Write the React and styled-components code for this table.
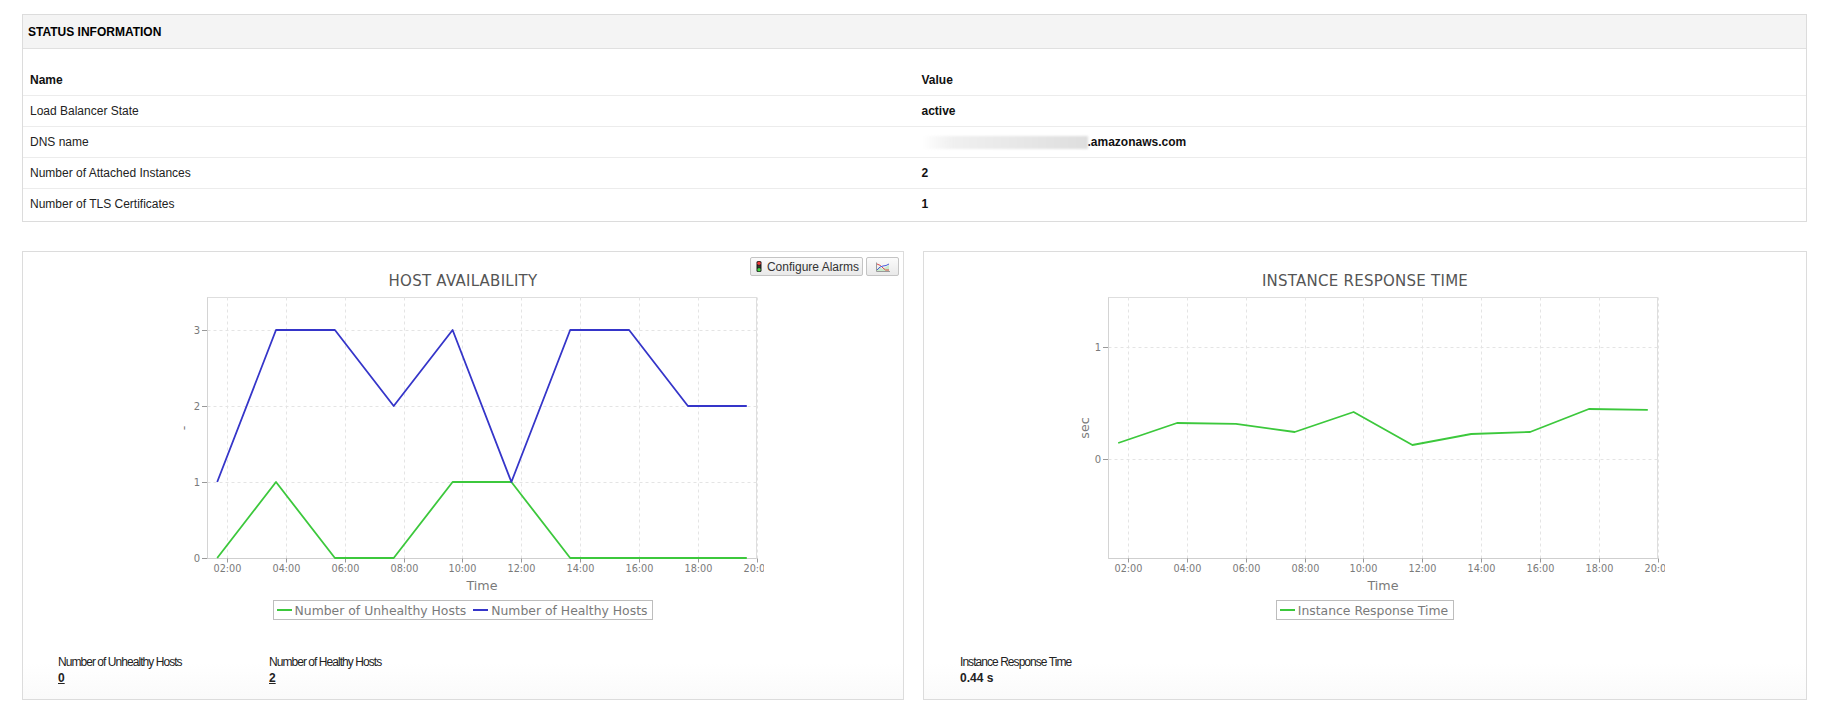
import React from 'react';
import styled, { createGlobalStyle } from 'styled-components';

const GlobalStyle = createGlobalStyle`
  html, body { margin: 0; padding: 0; background: #fff; }
  body { font-family: "Liberation Sans", Arial, sans-serif; font-size: 12px; color: #222; }
  * { box-sizing: border-box; }
`;

const Page = styled.div`
  width: 1822px;
  padding: 14px 15px 10px 22px;
`;

const StatusPanel = styled.section`
  border: 1px solid #dcdcdc;
  background: #fff;
`;

const PanelHeader = styled.div`
  height: 34px;
  display: flex;
  align-items: center;
  padding-left: 5px;
  background: #f4f4f4;
  border-bottom: 1px solid #e0e0e0;
  font-weight: bold;
  font-size: 12px;
  color: #000;
`;

const InfoTable = styled.div`
  margin-top: 16px;
  padding-bottom: 1px;
`;

const InfoRow = styled.div`
  display: grid;
  grid-template-columns: 1fr 1fr;
  align-items: center;
  height: 31px;
  border-bottom: 1px solid ${(p) => (p.$last ? 'transparent' : '#ececec')};
`;

const Cell = styled.div`
  padding-left: 7px;
  font-size: 12px;
  font-weight: ${(p) => (p.$bold ? 'bold' : 'normal')};
  color: ${(p) => (p.$bold ? '#111' : '#222')};
  display: flex;
  align-items: center;
`;

const Masked = styled.span`
  display: inline-block;
  width: 166px;
  height: 13px;
  background: linear-gradient(90deg, rgba(238,238,238,0) 0%, #f0f0f0 18%, #e8e8e8 55%, #dedede 100%);
  filter: blur(1.2px);
`;

const ChartsRow = styled.div`
  display: grid;
  grid-template-columns: 882px 884px;
  column-gap: 19px;
  margin-top: 29px;
`;

const ChartPanel = styled.section`
  position: relative;
  height: 449px;
  border: 1px solid #dcdcdc;
  display: flex;
  flex-direction: column;
  align-items: center;
  padding-top: 20px;
  background: linear-gradient(to bottom, #fff 0%, #fff 92%, #fafafa 100%);
`;

const Toolbar = styled.div`
  position: absolute;
  top: 5px;
  right: 4px;
  display: flex;
  gap: 3px;
`;

const ToolButton = styled.button`
  height: 19px;
  min-width: ${(p) => (p.$icon ? '33px' : 'auto')};
  padding: ${(p) => (p.$icon ? '0' : '0 3px 0 5px')};
  display: flex;
  align-items: center;
  justify-content: center;
  gap: 5px;
  border: 1px solid #c4c4c4;
  border-radius: 2px;
  background: linear-gradient(to bottom, #fbfbfb, #e9e9e9);
  font-family: "Liberation Sans", Arial, sans-serif;
  font-size: 12px;
  color: #333;
  cursor: pointer;
`;

const ChartTitle = styled.div`
  font-family: "DejaVu Sans", Verdana, sans-serif;
  font-size: 15px;
  line-height: 18px;
  letter-spacing: 0.25px;
  color: #555;
  margin-bottom: 1px;
`;

const ChartSvg = styled.svg`
  display: block;
  align-self: flex-start;
  font-family: "DejaVu Sans", Verdana, sans-serif;
`;

const Legend = styled.div`
  display: inline-flex;
  align-items: center;
  height: 20px;
  margin-top: 6px;
  padding: 0 5px 0 3px;
  gap: 7px;
  border: 1px solid #bdbdbd;
  font-family: "DejaVu Sans", Verdana, sans-serif;
  font-size: 12.4px;
  color: #7a7a7a;
`;

const LegendItem = styled.span`
  display: flex;
  align-items: center;
  gap: 3px;
`;

const Swatch = styled.span`
  width: 15px;
  height: 2px;
  background: ${(p) => p.$color};
`;

const Summary = styled.div`
  align-self: stretch;
  display: flex;
  margin-top: 35px;
  padding-left: ${(p) => p.$pad || '35px'};
`;

const SummaryItem = styled.div`
  width: 211px;
`;

const SummaryLabel = styled.div`
  font-size: 12px;
  line-height: 15px;
  letter-spacing: -0.95px;
  color: #222;
`;

const SummaryValue = styled.div`
  margin-top: 1px;
  font-size: 12px;
  line-height: 15px;
  font-weight: bold;
  color: #222;
  text-decoration: ${(p) => (p.$link ? 'underline' : 'none')};
`;

const BLUE = '#3535c9';
const GREEN = '#3cc83c';

const TrafficLight = () => (
  <svg width="6" height="11" viewBox="0 0 6 11">
    <rect x="0.5" y="0" width="5" height="11" rx="1.6" fill="#1f1f1f" />
    <circle cx="3" cy="2.3" r="1.7" fill="#f03a3a" />
    <circle cx="3" cy="5.5" r="1.2" fill="#3a3a30" />
    <circle cx="3" cy="8.7" r="1.7" fill="#46d646" />
  </svg>
);

const ChartTypeIcon = () => (
  <svg width="15" height="10" viewBox="0 0 15 10">
    <path d="M1 9 L4 5 L8 7 L14 3 L14 9 Z" fill="#bfe8bf" opacity="0.8" />
    <path d="M1.5 0.5 V9.5 H15" fill="none" stroke="#9a9a9a" strokeWidth="1" />
    <path d="M2 2 Q6 3 8 6 T14 8" fill="none" stroke="#e04a4a" strokeWidth="1" />
    <path d="M2 8 Q5 4 8 4 T14 2" fill="none" stroke="#4a5ad8" strokeWidth="1" />
  </svg>
);

const X_LABELS = ['02:00', '04:00', '06:00', '08:00', '10:00', '12:00', '14:00', '16:00', '18:00', '20:00'];
const xOfHour = (h) => 204 + (h - 2) * 29.42;
const xOfPoint = (k) => 194.2 + 58.84 * k;

function LineChart({ id, yTicks, yToPx, yTitle, series }) {
  const plotL = 184.5;
  const plotR = 733.5;
  const plotT = 6.5;
  const plotB = 267.5;
  return (
    <ChartSvg width="880" height="303" viewBox="0 0 880 303">
      <defs>
        <clipPath id={id}>
          <rect x="0" y="0" width="741" height="303" />
        </clipPath>
      </defs>
      <rect x={plotL} y={plotT} width={plotR - plotL} height={plotB - plotT} fill="#fff" stroke="#dedede" />
      {X_LABELS.map((l, i) => {
        const x = Math.round(xOfHour(2 + i * 2)) + 0.5;
        return (
          <line key={l} x1={x} x2={x} y1={plotT} y2={plotB} stroke="#e4e4e4" strokeDasharray="3 3" />
        );
      })}
      {yTicks.map((v) => {
        const y = Math.round(yToPx(v)) + 0.5;
        return (
          <g key={v}>
            <line x1={plotL} x2={plotR} y1={y} y2={y} stroke="#e4e4e4" strokeDasharray="3 3" />
            <line x1={179} x2={plotL} y1={y} y2={y} stroke="#999" />
            <text x="177" y={y + 3.6} fontSize="10" fill="#7a7a7a" textAnchor="end">{v}</text>
          </g>
        );
      })}
      <line x1={plotL} x2={plotR} y1={plotB} y2={plotB} stroke="#cfcfcf" />
      <line x1={plotL} x2={plotL} y1={plotT} y2={plotB} stroke="#d4d4d4" />
      <g clipPath={`url(#${id})`}>
        {X_LABELS.map((l, i) => {
          const x = Math.round(xOfHour(2 + i * 2)) + 0.5;
          return (
            <g key={l}>
              <line x1={x} x2={x} y1={plotB} y2={plotB + 4} stroke="#999" />
              <text x={x} y="280.8" fontSize="9.7" fill="#7a7a7a" textAnchor="middle">{l}</text>
            </g>
          );
        })}
      </g>
      <text x={(plotL + plotR) / 2} y="298.5" fontSize="12.7" fill="#7a7a7a" textAnchor="middle">Time</text>
      <text
        x="0"
        y="0"
        fontSize="12.7"
        fill="#7a7a7a"
        textAnchor="middle"
        transform={`translate(165 137) rotate(-90)`}
      >
        {yTitle}
      </text>
      {series.map((s) => (
        <polyline
          key={s.name}
          fill="none"
          stroke={s.color}
          strokeWidth="1.8"
          strokeLinejoin="round"
          points={s.values.map((v, k) => `${xOfPoint(k).toFixed(1)},${yToPx(v).toFixed(1)}`).join(' ')}
        />
      ))}
    </ChartSvg>
  );
}

const statusRows = [
  { name: 'Load Balancer State', value: 'active' },
  { name: 'DNS name', value: '.amazonaws.com', masked: true },
  { name: 'Number of Attached Instances', value: '2' },
  { name: 'Number of TLS Certificates', value: '1' },
];

const hostSeries = [
  { name: 'Number of Unhealthy Hosts', color: GREEN, values: [0, 1, 0, 0, 1, 1, 0, 0, 0, 0] },
  { name: 'Number of Healthy Hosts', color: BLUE, values: [1, 3, 3, 2, 3, 1, 3, 3, 2, 2] },
];

const responseSeries = [
  {
    name: 'Instance Response Time',
    color: GREEN,
    values: [0.143, 0.321, 0.313, 0.241, 0.42, 0.125, 0.223, 0.241, 0.446, 0.438],
  },
];

export default function App() {
  return (
    <>
      <GlobalStyle />
      <Page>
        <StatusPanel>
          <PanelHeader>STATUS INFORMATION</PanelHeader>
          <InfoTable>
            <InfoRow>
              <Cell $bold>Name</Cell>
              <Cell $bold>Value</Cell>
            </InfoRow>
            {statusRows.map((r, i) => (
              <InfoRow key={r.name} $last={i === statusRows.length - 1}>
                <Cell>{r.name}</Cell>
                <Cell $bold>
                  {r.masked && <Masked />}
                  {r.value}
                </Cell>
              </InfoRow>
            ))}
          </InfoTable>
        </StatusPanel>

        <ChartsRow>
          <ChartPanel>
            <Toolbar>
              <ToolButton>
                <TrafficLight />
                Configure Alarms
              </ToolButton>
              <ToolButton $icon>
                <ChartTypeIcon />
              </ToolButton>
            </Toolbar>
            <ChartTitle>HOST AVAILABILITY</ChartTitle>
            <LineChart
              id="clipHost"
              yTicks={[0, 1, 2, 3]}
              yToPx={(v) => 267 - v * 76}
              yTitle="-"
              series={hostSeries}
            />
            <Legend>
              {hostSeries.map((s) => (
                <LegendItem key={s.name}>
                  <Swatch $color={s.color} />
                  {s.name}
                </LegendItem>
              ))}
            </Legend>
            <Summary>
              <SummaryItem>
                <SummaryLabel>Number of Unhealthy Hosts</SummaryLabel>
                <SummaryValue $link>0</SummaryValue>
              </SummaryItem>
              <SummaryItem>
                <SummaryLabel>Number of Healthy Hosts</SummaryLabel>
                <SummaryValue $link>2</SummaryValue>
              </SummaryItem>
            </Summary>
          </ChartPanel>

          <ChartPanel>
            <ChartTitle>INSTANCE RESPONSE TIME</ChartTitle>
            <LineChart
              id="clipResp"
              yTicks={[0, 1]}
              yToPx={(v) => 168 - v * 112}
              yTitle="sec"
              series={responseSeries}
            />
            <Legend>
              {responseSeries.map((s) => (
                <LegendItem key={s.name}>
                  <Swatch $color={s.color} />
                  {s.name}
                </LegendItem>
              ))}
            </Legend>
            <Summary $pad="36px">
              <SummaryItem>
                <SummaryLabel>Instance Response Time</SummaryLabel>
                <SummaryValue>0.44 s</SummaryValue>
              </SummaryItem>
            </Summary>
          </ChartPanel>
        </ChartsRow>
      </Page>
    </>
  );
}
